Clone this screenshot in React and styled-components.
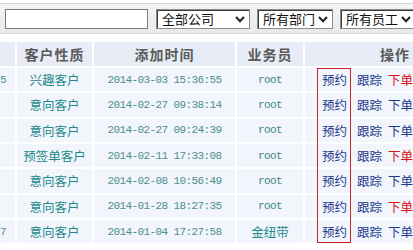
import React from 'react'
import styled, { createGlobalStyle } from 'styled-components'

const GlobalStyle = createGlobalStyle`
  html, body {
    margin: 0;
    padding: 0;
    background: #ffffff;
  }
  body {
    font-family: "Noto Sans CJK SC", "Liberation Sans", sans-serif;
  }
`

// 整頁外框
const Page = styled.div`
  width: 413px;
  height: 250px;
  overflow: hidden;
  background: #fff;
  padding-top: 3px;
  box-sizing: border-box;
`

// 上方篩選列
const FilterBar = styled.div`
  display: flex;
  align-items: flex-start;
  gap: 7px;
  height: 31px;
  padding: 5px 0 0 5px;
  box-sizing: border-box;
  border-top: 1px solid #d2d2d2;
  border-bottom: 1px solid #d8d8d8;
  background: linear-gradient(#f4f4f4, #eaeaea);
  width: 440px;
`

const SearchInput = styled.div`
  width: 143px;
  height: 20px;
  box-sizing: border-box;
  border: 1px solid #7b7b7b;
  background: #fff;
  margin-right: 1px;
`

const SelectBox = styled.div`
  display: flex;
  align-items: center;
  justify-content: space-between;
  width: ${p => p.w}px;
  height: 20px;
  box-sizing: border-box;
  border: 1px solid #8a8a8a;
  box-shadow: inset 1px 1px 0 #3c3c3c;
  background: #fff;
  padding: 0 4px 0 5px;
  font-size: 13px;
  line-height: 18px;
  color: #111;
  flex-shrink: 0;
`

const Chevron = () => (
  <svg width="10" height="7" viewBox="0 0 10 7">
    <path d="M1 1 L5 5.2 L9 1" fill="none" stroke="#222" strokeWidth="2" />
  </svg>
)

const Select = ({ label, w }) => (
  <SelectBox w={w}>
    <span>{label}</span>
    <Chevron />
  </SelectBox>
)

// 表格
const Table = styled.div`
  display: flex;
  flex-direction: column;
  gap: 2px;
  margin-top: 8px;
`

const Row = styled.div`
  display: grid;
  grid-template-columns: 15px 75px 141px 66px 180px;
  column-gap: 2px;
  height: ${p => (p.head ? 24 : 23.33)}px;
`

const Cell = styled.div`
  display: flex;
  align-items: center;
  justify-content: ${p => p.align || 'center'};
  background: ${p => (p.head ? '#e8ecf6' : '#f2f5fb')};
  overflow: hidden;
  white-space: nowrap;
  font-size: 12.5px;
  color: #1d8a8a;
`

const HeadText = styled.span`
  font-size: 14px;
  font-weight: bold;
  color: #5a5a5a;
  letter-spacing: 1px;
`

const Mono = styled.span`
  font-family: "Liberation Mono", monospace;
  font-size: 11px;
  letter-spacing: -0.6px;
  color: ${p => p.color || '#4c8e8e'};
`

const Body = styled.div`
  position: relative;
  display: flex;
  flex-direction: column;
  gap: 2px;
`

// 紅框標註
const Highlight = styled.div`
  position: absolute;
  left: 317px;
  top: 0;
  bottom: 0;
  width: 34px;
  box-sizing: border-box;
  border: 1px solid #c0272d;
  pointer-events: none;
`

const Actions = styled.div`
  display: flex;
  padding-left: 17px;
`

const ActionLink = styled.a`
  font-size: 12.5px;
  color: ${p => (p.red ? '#d41414' : '#1b3a8c')};
  text-decoration: none;
  margin-right: ${p => p.gap || 0}px;
`

const rows = [
  { id: '5', type: '兴趣客户', time: '2014-03-03 15:36:55', user: 'root', red: true },
  { id: '', type: '意向客户', time: '2014-02-27 09:38:14', user: 'root' },
  { id: '', type: '意向客户', time: '2014-02-27 09:24:39', user: 'root' },
  { id: '', type: '预签单客户', time: '2014-02-11 17:33:08', user: 'root', red: true },
  { id: '', type: '意向客户', time: '2014-02-08 10:56:49', user: 'root' },
  { id: '', type: '意向客户', time: '2014-01-28 18:27:35', user: 'root', red: true },
  { id: '7', type: '意向客户', time: '2014-01-04 17:27:58', user: '金纽带' },
]

const App = () => {
  return (
    <Page>
      <GlobalStyle />
      <FilterBar>
        <SearchInput />
        <Select label="全部公司" w={94} />
        <Select label="所有部门" w={76} />
        <Select label="所有员工" w={76} />
      </FilterBar>
      <Table>
        <Row head>
          <Cell head />
          <Cell head><HeadText>客户性质</HeadText></Cell>
          <Cell head><HeadText>添加时间</HeadText></Cell>
          <Cell head><HeadText>业务员</HeadText></Cell>
          <Cell head><HeadText>操作</HeadText></Cell>
        </Row>
        <Body>
          {rows.map((r, i) => (
            <Row key={i}>
              <Cell align="flex-start"><Mono>{r.id}</Mono></Cell>
              <Cell>{r.type}</Cell>
              <Cell><Mono>{r.time}</Mono></Cell>
              <Cell>{r.user === 'root' ? <Mono color="#3d8585">{r.user}</Mono> : r.user}</Cell>
              <Cell align="flex-start">
                <Actions>
                  <ActionLink gap={10}>预约</ActionLink>
                  <ActionLink gap={6}>跟踪</ActionLink>
                  <ActionLink red={r.red}>下单</ActionLink>
                </Actions>
              </Cell>
            </Row>
          ))}
          <Highlight />
        </Body>
      </Table>
    </Page>
  )
}

export default App
